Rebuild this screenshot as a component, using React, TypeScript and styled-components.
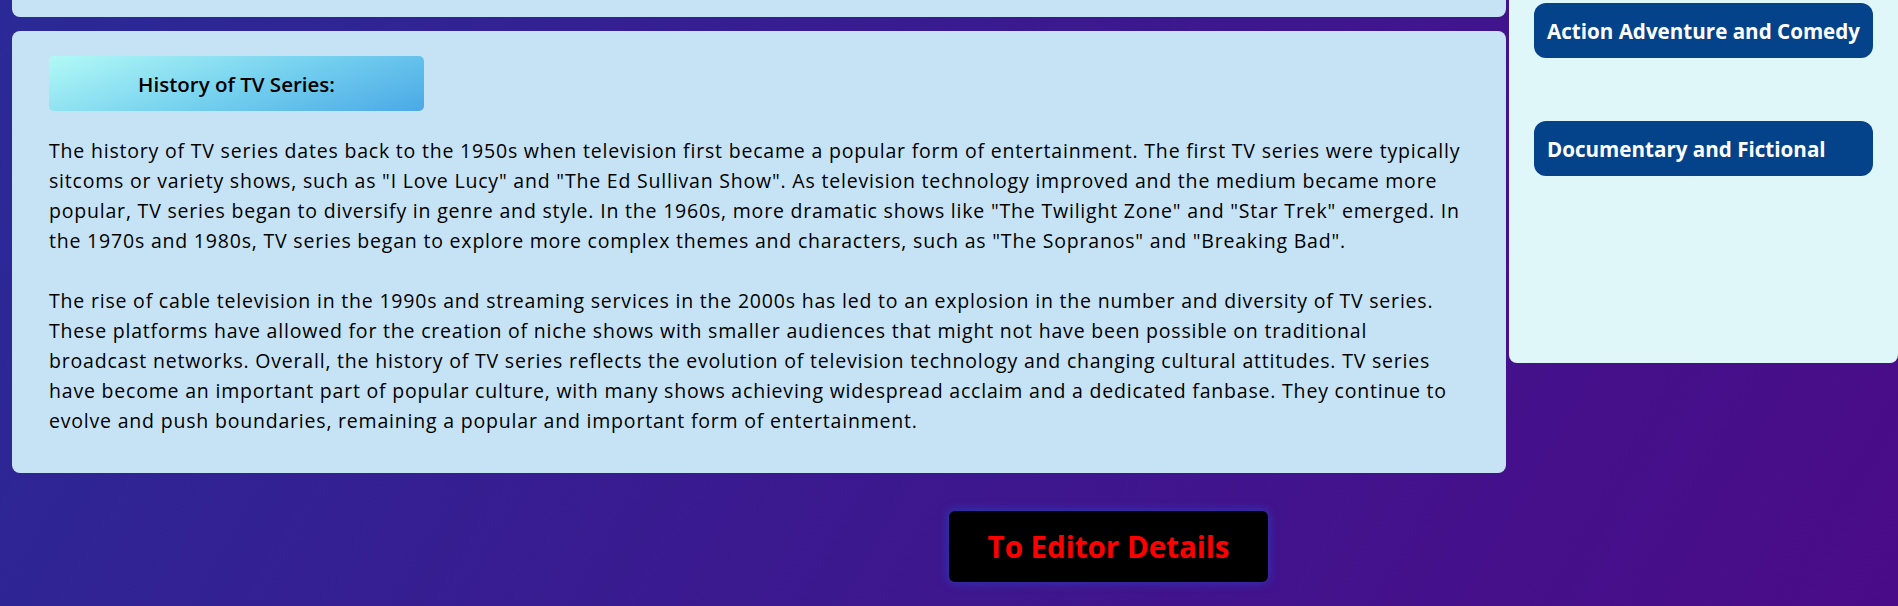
import React from "react";
import styled, { createGlobalStyle } from "styled-components";

const GlobalStyle = createGlobalStyle`
  html, body {
    margin: 0;
    padding: 0;
  }
  body {
    width: 1898px;
    height: 606px;
    overflow: hidden;
    background: linear-gradient(120deg, #2a2a97 0%, #3a1a90 45%, #4b0b88 100%);
    font-family: "Open Sans", "Liberation Sans", sans-serif;
    color: #000;
  }
`;

const Page = styled.div`
  display: grid;
  grid-template-columns: 1494px 389px;
  column-gap: 3px;
  padding-left: 12px;
`;

const MainColumn = styled.div`
  display: flex;
  flex-direction: column;
  gap: 14px;
`;

const CardTail = styled.div`
  height: 17px;
  background: #c6e3f5;
  border-radius: 0 0 8px 8px;
`;

const Card = styled.section`
  background: #c6e3f5;
  border-radius: 8px;
  padding: 25px 40px 38px 37px;
  height: 442px;
  box-sizing: border-box;
`;

const HeadingBox = styled.div`
  width: 375px;
  height: 55px;
  border-radius: 5px;
  background: linear-gradient(160deg, #b2f9f6 0%, #78d3ef 50%, #4aa9e6 100%);
  display: flex;
  align-items: center;
  justify-content: center;
  font-size: 20.5px;
  font-weight: 600;
  margin-bottom: 25px;
`;

const Body = styled.div`
  font-size: 19.5px;
  line-height: 30px;
  letter-spacing: 0.8px;
`;

const Para = styled.p`
  margin: 0;
  & + & {
    margin-top: 30px;
  }
`;

const Sidebar = styled.aside`
  background: #e0f7fa;
  border-radius: 0 0 8px 8px;
  height: 363px;
  box-sizing: border-box;
  padding: 3px 25px 0 25px;
  display: flex;
  flex-direction: column;
  gap: 63px;
`;

const GenreButton = styled.div`
  height: 55px;
  border-radius: 12px;
  background: #04438a;
  color: #fff;
  font-size: 20.6px;
  font-weight: 700;
  display: flex;
  align-items: center;
  padding-left: 13px;
`;

const Footer = styled.div`
  grid-column: 1 / -1;
  padding-left: calc(949px - 12px);
  padding-top: 38px;
`;

const EditorButton = styled.button`
  width: 319px;
  height: 71px;
  border: none;
  border-radius: 6px;
  background: #000;
  color: #ff0000;
  font-family: inherit;
  font-size: 29.5px;
  font-weight: 700;
  box-shadow: 0 0 8px 2px rgba(40, 70, 200, 0.55);
  cursor: pointer;
`;

export default function App() {
  return (
    <>
      <GlobalStyle />
      <Page>
        <MainColumn>
          <CardTail />
          <Card>
            <HeadingBox>History of TV Series:</HeadingBox>
            <Body>
              <Para>
                The history of TV series dates back to the 1950s when television first became a popular form of
                entertainment. The first TV series were typically sitcoms or variety shows, such as "I Love Lucy" and
                "The Ed Sullivan Show". As television technology improved and the medium became more popular, TV series
                began to diversify in genre and style. In the 1960s, more dramatic shows like "The Twilight Zone" and
                "Star Trek" emerged. In the 1970s and 1980s, TV series began to explore more complex themes and
                characters, such as "The Sopranos" and "Breaking Bad".
              </Para>
              <Para>
                The rise of cable television in the 1990s and streaming services in the 2000s has led to an explosion in
                the number and diversity of TV series. These platforms have allowed for the creation of niche shows with
                smaller audiences that might not have been possible on traditional broadcast networks. Overall, the
                history of TV series reflects the evolution of television technology and changing cultural attitudes. TV
                series have become an important part of popular culture, with many shows achieving widespread acclaim
                and a dedicated fanbase. They continue to evolve and push boundaries, remaining a popular and important
                form of entertainment.
              </Para>
            </Body>
          </Card>
        </MainColumn>
        <Sidebar>
          <GenreButton>Action Adventure and Comedy</GenreButton>
          <GenreButton>Documentary and Fictional</GenreButton>
        </Sidebar>
        <Footer>
          <EditorButton>To Editor Details</EditorButton>
        </Footer>
      </Page>
    </>
  );
}
